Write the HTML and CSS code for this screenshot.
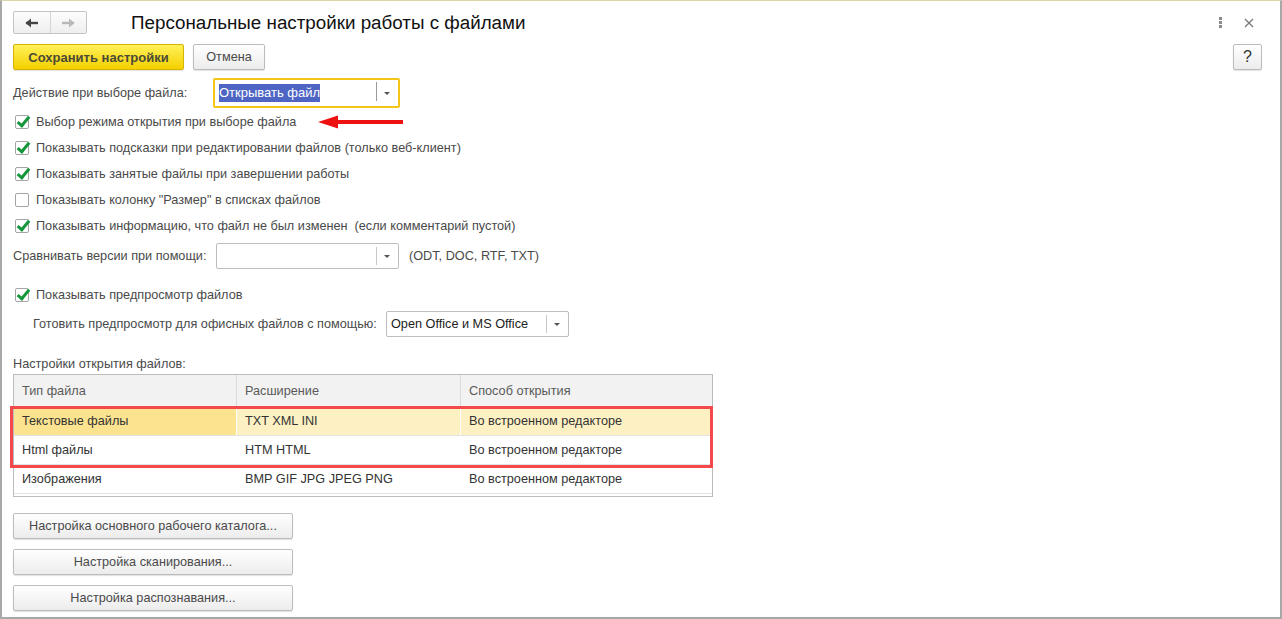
FILE: index.html
```html
<!DOCTYPE html>
<html lang="ru">
<head>
<meta charset="utf-8">
<title>Персональные настройки работы с файлами</title>
<link rel="stylesheet" href="styles.css">
</head>
<body>
<div class="frame">
  <div class="head">
    <div class="nav">
      <span class="nav-btn"><svg width="14" height="10" viewBox="0 0 14 10"><path d="M1 5 H13" stroke="#444" stroke-width="2.4"/><path d="M0.5 5 L6 0.5 V9.5 Z" fill="#444"/></svg></span>
      <span class="nav-btn"><svg width="14" height="10" viewBox="0 0 14 10"><path d="M1 5 H13" stroke="#b8b8b8" stroke-width="2.4"/><path d="M13.5 5 L8 0.5 V9.5 Z" fill="#b8b8b8"/></svg></span>
    </div>
    <h1 class="title">Персональные настройки работы с файлами</h1>
    <div class="head-tools">
      <span class="kebab"><i></i><i></i><i></i></span>
      <svg class="close" width="10" height="10" viewBox="0 0 10 10"><path d="M1 1 L9 9 M9 1 L1 9" stroke="#777" stroke-width="1.2"/></svg>
    </div>
  </div>

  <div class="toolbar">
    <button class="btn btn-primary">Сохранить настройки</button>
    <button class="btn btn-cancel">Отмена</button>
    <button class="btn btn-help">?</button>
  </div>

  <div class="row row-action">
    <span class="label label-action">Действие при выборе файла:</span>
    <div class="combo combo-focus">
      <span class="combo-text"><span class="sel">Открывать файл</span></span>
      <span class="combo-arrow"><i></i></span>
    </div>
    <svg class="red-arrow" width="86" height="14" viewBox="0 0 86 14"><path d="M18 7 H85" stroke="#ee1111" stroke-width="4"/><path d="M0 7 L20 0.5 V13.5 Z" fill="#ee1111"/></svg>
  </div>

  <div class="checks">
    <label class="check"><span class="box on"></span>Выбор режима открытия при выборе файла</label>
    <label class="check"><span class="box on"></span>Показывать подсказки при редактировании файлов (только веб-клиент)</label>
    <label class="check"><span class="box on"></span>Показывать занятые файлы при завершении работы</label>
    <label class="check"><span class="box"></span>Показывать колонку "Размер" в списках файлов</label>
    <label class="check"><span class="box on"></span>Показывать информацию, что файл не был изменен &nbsp;(если комментарий пустой)</label>
  </div>

  <div class="row row-compare">
    <span class="label label-compare">Сравнивать версии при помощи:</span>
    <div class="combo combo-compare">
      <span class="combo-text"></span>
      <span class="combo-arrow"><i></i></span>
    </div>
    <span class="label note">(ODT, DOC, RTF, TXT)</span>
  </div>

  <label class="check check-preview"><span class="box on"></span>Показывать предпросмотр файлов</label>

  <div class="row row-office">
    <span class="label label-office">Готовить предпросмотр для офисных файлов с помощью:</span>
    <div class="combo combo-office">
      <span class="combo-text">Open Office и MS Office</span>
      <span class="combo-arrow"><i></i></span>
    </div>
  </div>

  <div class="section-label">Настройки открытия файлов:</div>

  <div class="grid">
    <div class="grid-row grid-header">
      <div class="cell c1">Тип файла</div>
      <div class="cell c2">Расширение</div>
      <div class="cell c3">Способ открытия</div>
    </div>
    <div class="grid-body">
      <div class="grid-row current">
        <div class="cell c1">Текстовые файлы</div>
        <div class="cell c2">TXT XML INI</div>
        <div class="cell c3">Во встроенном редакторе</div>
      </div>
      <div class="grid-row">
        <div class="cell c1">Html файлы</div>
        <div class="cell c2">HTM HTML</div>
        <div class="cell c3">Во встроенном редакторе</div>
      </div>
      <div class="grid-row">
        <div class="cell c1">Изображения</div>
        <div class="cell c2">BMP GIF JPG JPEG PNG</div>
        <div class="cell c3">Во встроенном редакторе</div>
      </div>
      <div class="highlight"></div>
    </div>
  </div>

  <div class="actions">
    <button class="btn btn-wide">Настройка основного рабочего каталога...</button>
    <button class="btn btn-wide">Настройка сканирования...</button>
    <button class="btn btn-wide">Настройка распознавания...</button>
  </div>
</div>
</body>
</html>
```

FILE: styles.css
```css
* { box-sizing: border-box; }
html, body { margin: 0; padding: 0; background: #fff; }
body {
  font-family: Arial, "Liberation Sans", sans-serif;
  font-size: 12.7px;
  color: #4a4a4a;
}
.frame {
  width: 1282px;
  height: 619px;
  border-left: 2px solid #a8a8a8;
  border-right: 2px solid #a8a8a8;
  border-bottom: 2px solid #a8a8a8;
  border-top: 1px solid #d9d6a8;
  padding: 10px 0 0 11px;
  position: relative;
  overflow: hidden;
}

/* header */
.head {
  display: flex;
  align-items: center;
  height: 23px;
  padding-right: 26px;
}
.nav {
  display: flex;
  width: 74px;
  height: 23px;
  border: 1px solid #c4c4c4;
  border-radius: 2px;
  background: linear-gradient(#fdfdfd, #eeeeee);
}
.nav-btn {
  flex: 1;
  display: flex;
  align-items: center;
  justify-content: center;
}
.nav-btn + .nav-btn { border-left: 1px solid #d4d4d4; }
.title {
  margin: 0 0 0 44px;
  font-size: 18.8px;
  font-weight: normal;
  color: #111;
  flex: 1;
  line-height: 23px;
  white-space: nowrap;
}
.head-tools {
  display: flex;
  align-items: center;
  gap: 22px;
}
.kebab {
  display: flex;
  flex-direction: column;
  gap: 1px;
}
.kebab i {
  width: 3px;
  height: 3px;
  background: #8a8a8a;
  display: block;
}

/* toolbar */
.toolbar {
  display: flex;
  align-items: center;
  margin-top: 10px;
  padding-right: 18px;
  height: 26px;
}
.btn {
  font-family: Arial, "Liberation Sans", sans-serif;
  font-size: 12.7px;
  color: #4a4a4a;
  height: 26px;
  padding: 0 12px;
  border: 1px solid #bcbcbc;
  border-radius: 2px;
  background: linear-gradient(#ffffff, #ececec);
  box-shadow: 0 1px 1px rgba(0,0,0,0.12);
  cursor: default;
}
.btn-primary {
  width: 171px;
  font-weight: bold;
  font-size: 13px;
  color: #4a4a37;
  border-color: #d6b400;
  background: linear-gradient(#fff159, #f5d000);
}
.btn-cancel {
  margin-left: 9px;
  width: 72px;
}
.btn-help {
  margin-left: auto;
  width: 29px;
  padding: 0;
  font-size: 16px;
  color: #333;
}

/* rows */
.row {
  display: flex;
  align-items: center;
}
.label { white-space: nowrap; }
.row-action {
  margin-top: 8px;
  height: 30px;
}
.label-action { width: 200px; }
.label-compare { width: 203px; }
.label-office { width: 353px; }
.combo {
  display: flex;
  height: 26px;
  border: 1px solid #bdbdbd;
  border-radius: 2px;
  background: #fff;
}
.combo-text {
  flex: 1;
  display: flex;
  align-items: center;
  padding-left: 4px;
  color: #222;
  white-space: nowrap;
  overflow: hidden;
}
.combo-arrow {
  width: 22px;
  display: flex;
  align-items: center;
  justify-content: center;
  position: relative;
}
.combo-arrow::before {
  content: "";
  position: absolute;
  left: 0;
  top: 3px;
  bottom: 3px;
  border-left: 1px solid #c8c8c8;
}
.combo-arrow i {
  width: 0;
  height: 0;
  border-left: 3px solid transparent;
  border-right: 3px solid transparent;
  border-top: 3px solid #555;
}
.combo-focus {
  width: 187px;
  height: 30px;
  border: 2px solid #f5c518;
}
.combo-focus .combo-text { padding-left: 4px; font-size: 13px; }
.sel {
  background: #4e65c4;
  color: #fff;
  padding: 1px 0 2px 0;
}
.combo-focus .combo-arrow::before { border-left-color: #9a9a9a; top: 2px; bottom: 5px; }
.red-arrow {
  position: absolute;
  left: 316px;
  top: 114px;
}

/* checkboxes */
.checks { margin-top: 1px; }
.check {
  display: flex;
  align-items: center;
  height: 26px;
  padding-left: 2px;
  white-space: nowrap;
}
.box {
  width: 14px;
  height: 14px;
  border: 1px solid #a5a5a5;
  border-radius: 2px;
  background: #fff;
  margin-right: 7px;
  position: relative;
  flex: none;
}
.box.on::after {
  content: "";
  position: absolute;
  left: 4px;
  top: -2px;
  width: 4px;
  height: 10px;
  border-right: 3px solid #15963a;
  border-bottom: 3px solid #15963a;
  transform: rotate(40deg);
}

.row-compare {
  margin-top: 4px;
  height: 26px;
}
.combo-compare {
  width: 183px;
}
.note { margin-left: 10px; }

.check-preview { margin-top: 13px; }

.row-office {
  margin-top: 3px;
  height: 26px;
  padding-left: 20px;
}
.combo-office {
  width: 183px;
}

.section-label {
  margin-top: 20px;
  height: 14px;
  line-height: 14px;
}

/* grid */
.grid {
  margin-top: 3px;
  width: 700px;
  height: 123px;
  border: 1px solid #bcbcbc;
}
.grid-row {
  display: flex;
  height: 29px;
  border-bottom: 1px solid #e3e3e3;
}
.grid-header {
  height: 32px;
  background: #f2f2f2;
  color: #5a5a5a;
  border-bottom: 1px solid #e0e0e0;
}
.cell {
  display: flex;
  align-items: center;
  padding-left: 8px;
  white-space: nowrap;
  color: #333;
}
.grid-header .cell { color: #5a5a5a; }
.c1 { width: 223px; }
.c2 { width: 224px; }
.c3 { flex: 1; }
.grid-header .c1, .grid-header .c2 { border-right: 1px solid #dadada; }
.current { background: #fdf1c4; }
.current .c1 { background: #fce38f; border-right: 1px solid #fff; }
.current .c2 { border-right: 1px solid #fff; }
.grid-body { position: relative; }
.highlight {
  position: absolute;
  left: -4px;
  top: -1px;
  width: 703px;
  height: 62px;
  border: 3px solid #f4484a;
}

/* actions */
.actions {
  margin-top: 16px;
  display: flex;
  flex-direction: column;
  gap: 10px;
}
.btn-wide {
  width: 280px;
  height: 26px;
}
```
